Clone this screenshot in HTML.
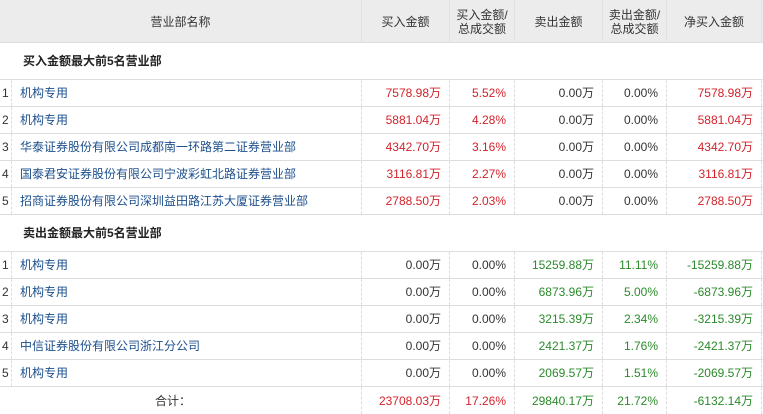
<!DOCTYPE html>
<html><head><meta charset="utf-8"><style>
*{margin:0;padding:0;box-sizing:border-box}
body{width:763px;height:414px;background:#fff;font-family:"Liberation Sans","Noto Sans CJK SC",sans-serif;font-size:12px;line-height:14px;color:#333;position:relative;overflow:hidden}
.h{position:absolute;top:0;left:0;width:763px;height:43px;background:#ececec;border-bottom:1px solid #ddd}
.hc{position:absolute;top:0;height:43px;display:flex;align-items:center;justify-content:center;text-align:center;line-height:14px;color:#333;border-right:1px solid #e2e2e2}
.r{position:absolute;left:0;width:763px;border-bottom:1px solid #ddd}
.c{position:absolute;top:0;height:100%;display:flex;align-items:center;justify-content:flex-end;padding-right:8px;border-right:1px dashed #ddd}
.c span,.n span,.i span{display:block;height:14px;line-height:14px}
.i{position:absolute;left:0;width:12px;top:0;height:100%;display:flex;align-items:center;padding-left:2px;border-right:1px dashed #ddd;color:#333}
.n{position:absolute;left:12px;width:350px;top:0;height:100%;display:flex;align-items:center;padding-left:8px;color:#1c4f8c;border-right:1px dashed #ddd}
.red{color:#d3222a}.grn{color:#2b8a2b}
.sec{font-weight:bold;color:#222;padding-left:23px;display:flex;align-items:center}
</style></head><body>
<div class="h">
<div class="hc" style="left:0;width:362px">营业部名称</div>
<div class="hc" style="left:362px;width:88px">买入金额</div>
<div class="hc" style="left:450px;width:65px">买入金额/<br>总成交额</div>
<div class="hc" style="left:515px;width:88px">卖出金额</div>
<div class="hc" style="left:603px;width:64px">卖出金额/<br>总成交额</div>
<div class="hc" style="left:667px;width:95px">净买入金额</div>
</div>
<div class="r sec" style="top:43px;height:37px">买入金额最大前5名营业部</div>
<div id="rows"></div>
<script>
var b=[["1","机构专用","7578.98万","5.52%","0.00万","0.00%","7578.98万"],["2","机构专用","5881.04万","4.28%","0.00万","0.00%","5881.04万"],["3","华泰证券股份有限公司成都南一环路第二证券营业部","4342.70万","3.16%","0.00万","0.00%","4342.70万"],["4","国泰君安证券股份有限公司宁波彩虹北路证券营业部","3116.81万","2.27%","0.00万","0.00%","3116.81万"],["5","招商证券股份有限公司深圳益田路江苏大厦证券营业部","2788.50万","2.03%","0.00万","0.00%","2788.50万"]];
var s=[["1","机构专用","0.00万","0.00%","15259.88万","11.11%","-15259.88万"],["2","机构专用","0.00万","0.00%","6873.96万","5.00%","-6873.96万"],["3","机构专用","0.00万","0.00%","3215.39万","2.34%","-3215.39万"],["4","中信证券股份有限公司浙江分公司","0.00万","0.00%","2421.37万","1.76%","-2421.37万"],["5","机构专用","0.00万","0.00%","2069.57万","1.51%","-2069.57万"]];
var L=[[362,88],[450,65],[515,88],[603,64],[667,95]];
function row(d,top,cl){var h='<div class="r" style="top:'+top+'px;height:27px"><div class="i"><span>'+d[0]+'</span></div><div class="n"><span>'+d[1]+'</span></div>';for(var k=0;k<5;k++)h+='<div class="c '+cl[k]+'" style="left:'+L[k][0]+'px;width:'+L[k][1]+'px"><span>'+d[k+2]+'</span></div>';return h+'</div>';}
var o='';
b.forEach(function(d,i){o+=row(d,80+27*i,["red","red","","","red"]);});
o+='<div class="r sec" style="top:215px;height:37px">卖出金额最大前5名营业部</div>';
s.forEach(function(d,i){o+=row(d,252+27*i,["","","grn","grn","grn"]);});
var t='<div class="r" style="top:387px;height:27px;border-bottom:none"><div class="c" style="left:0;width:362px;justify-content:flex-end;padding-right:170px"><span>合计：</span></div>';
var tv=["23708.03万","17.26%","29840.17万","21.72%","-6132.14万"],tc=["red","red","grn","grn","grn"];
for(var k=0;k<5;k++)t+='<div class="c '+tc[k]+'" style="left:'+L[k][0]+'px;width:'+L[k][1]+'px"><span>'+tv[k]+'</span></div>';
o+=t+'</div>';
document.getElementById('rows').innerHTML=o;
</script>
</body></html>
